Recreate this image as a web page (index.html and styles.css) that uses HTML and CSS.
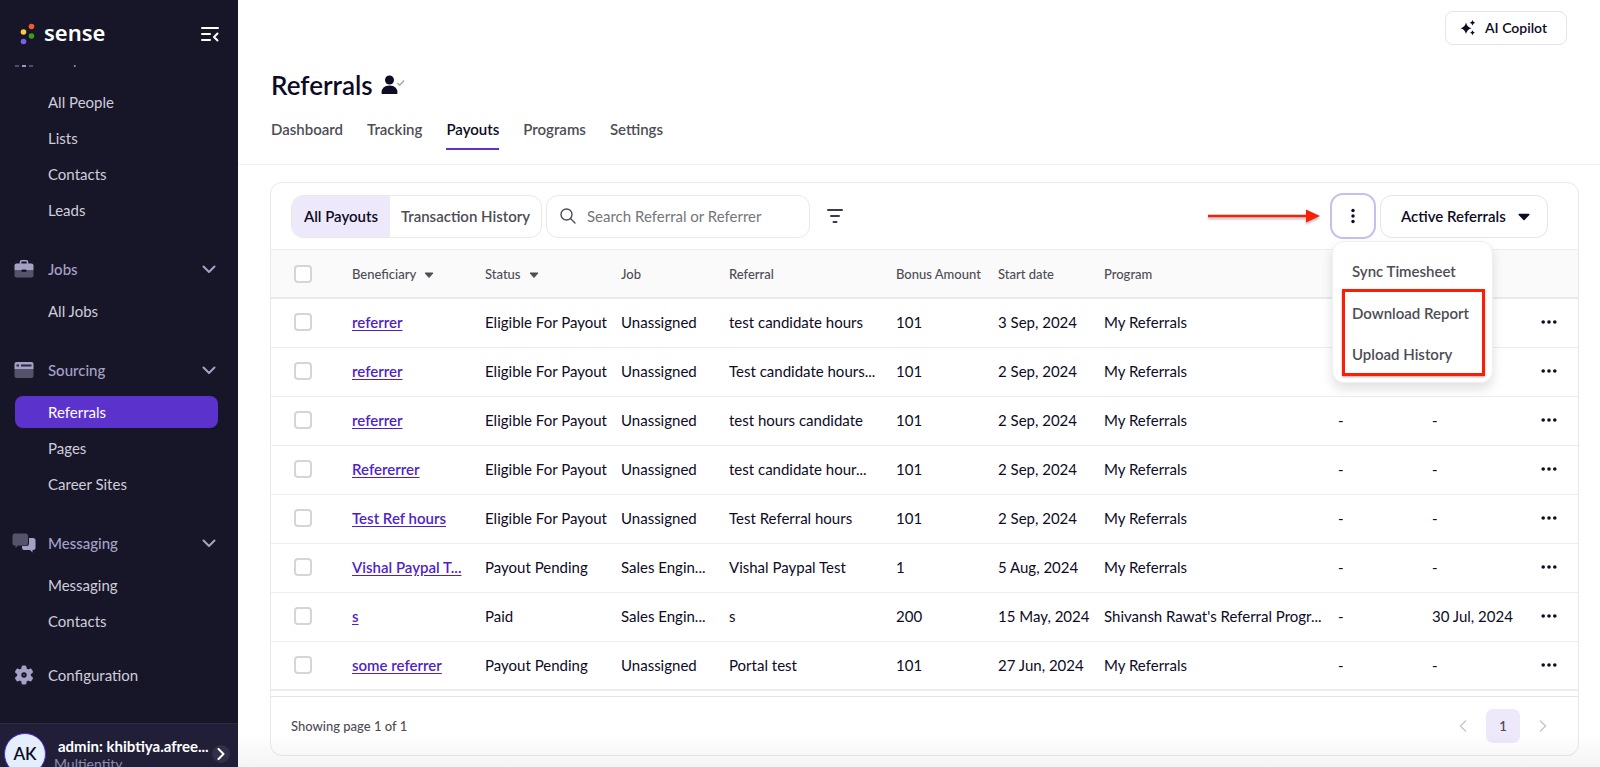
FILE: index.html
```html
<!DOCTYPE html>
<html lang="en">
<head>
<meta charset="utf-8">
<title>Referrals - Payouts</title>
<link rel="stylesheet" href="styles.css">
</head>
<body>
<div class="app">
  <aside class="sidebar">
    <div class="brand">
      <svg class="brand-mark" width="16" height="22" viewBox="0 0 16 22"><circle cx="11.5" cy="3.5" r="2.8" fill="#f4592b"/><circle cx="3.5" cy="9" r="2.8" fill="#fbc940"/><circle cx="11.5" cy="13" r="2.8" fill="#36a015"/><circle cx="3.5" cy="18.500" r="2.800" fill="#7661e6"/></svg>
      <span class="brand-name">sense</span>
      <button class="collapse" aria-label="Collapse menu"><svg width="20" height="18" viewBox="0 0 20 18" fill="none" stroke="#fff" stroke-width="2" stroke-linecap="round" stroke-linejoin="round"><path d="M2 3h16M2 9h8M2 15h8M17.500 8.500l-3.500 3.500 3.500 3.500"/></svg></button>
    </div>
    <nav class="nav">
      <div class="nav-clipped">
        <svg width="20" height="10" viewBox="0 0 20 10"><path d="M1 4h4v6H1zM15 4h4v6h-4z" fill="#504e66"/><path d="M8 3h4v7H8z" fill="#9d99bd"/></svg>
        <span>People</span>
      </div>
      <a href="#" class="nav-item">All People</a>
      <a href="#" class="nav-item">Lists</a>
      <a href="#" class="nav-item">Contacts</a>
      <a href="#" class="nav-item">Leads</a>
      <button class="nav-group">
        <svg width="20" height="20" viewBox="0 0 20 20"><path d="M6.500 5V2.800q0-1 1-1h5q1 0 1 1V5" fill="none" stroke="#a5a1c5" stroke-width="1.600"/><path d="M.5 6.500q0-2 2-2h15q2 0 2 2V11H.5z" fill="#a5a1c5"/><path d="M.5 11h19v5.500q0 2-2 2h-15q-2 0-2-2z" fill="#55536b"/><rect x="7.500" y="10.500" width="5" height="2.500" rx="1" fill="#171629"/></svg>
        <span>Jobs</span><svg class="chev" width="14" height="9" viewBox="0 0 14 9"><path d="M1.500 1.500 7 7l5.500-5.500"/></svg>
      </button>
      <a href="#" class="nav-item">All Jobs</a>
      <button class="nav-group">
        <svg width="20" height="20" viewBox="0 0 20 20"><path d="M.5 4q0-2 2-2h15q2 0 2 2v5H.5z" fill="#a5a1c5"/><path d="M.5 9h19v7q0 2-2 2h-15q-2 0-2-2z" fill="#55536b"/><path d="M2.500 4.500H5v2H2.500zM7 4.500h10.500v2H7z" fill="#2b2940"/></svg>
        <span>Sourcing</span><svg class="chev" width="14" height="9" viewBox="0 0 14 9"><path d="M1.500 1.500 7 7l5.500-5.500"/></svg>
      </button>
      <a href="#" class="nav-item active" aria-current="page">Referrals</a>
      <a href="#" class="nav-item">Pages</a>
      <a href="#" class="nav-item">Career Sites</a>
      <button class="nav-group">
        <svg width="24" height="20" viewBox="0 0 24 20"><path d="M17 5h4q2.500 0 2.500 2.500v7q0 2.500-2.500 2.500h-.5v2.500L18 17h-6q-2 0-2-2.500V13h4.500q2.500 0 2.500-2.500z" fill="#a5a1c5"/><path d="M2.500.5h11q2.500 0 2.500 2.500v7q0 2.500-2.500 2.500H6L3.500 15v-2.500h-1Q.5 12.500.5 10V3q0-2.500 2-2.500z" fill="#55536b"/></svg>
        <span>Messaging</span><svg class="chev" width="14" height="9" viewBox="0 0 14 9"><path d="M1.500 1.500 7 7l5.500-5.500"/></svg>
      </button>
      <a href="#" class="nav-item">Messaging</a>
      <a href="#" class="nav-item">Contacts</a>
      <a href="#" class="nav-group config">
        <svg width="20" height="20" viewBox="0 0 20 20"><g fill="#a5a1c5"><circle cx="10" cy="10" r="7"/><rect x="7.500" y=".5" width="5" height="19" rx="1.500"/><rect x="7.500" y=".5" width="5" height="19" rx="1.500" transform="rotate(60 10 10)"/><rect x="7.500" y=".5" width="5" height="19" rx="1.500" transform="rotate(120 10 10)"/></g><circle cx="10" cy="10" r="2.700" fill="#171629"/><circle cx="10" cy="10" r="1" fill="#55536b"/></svg>
        <span>Configuration</span>
      </a>
    </nav>
    <div class="account">
      <div class="avatar">AK</div>
      <div class="who"><div class="who-name">admin: khibtiya.afree...</div><div class="who-org">Multientity</div></div>
      <button class="account-open" aria-label="Open account menu"><svg width="8" height="12" viewBox="0 0 8 12" fill="none" stroke="#fff" stroke-width="2" stroke-linecap="round" stroke-linejoin="round"><path d="M1.500 1 6.500 6l-5 5"/></svg></button>
    </div>
  </aside>

  <main class="main">
    <div class="topbar">
      <button class="copilot"><svg width="16" height="16" viewBox="0 0 16 16" fill="#0d0b25"><path d="M6 2.500Q7 7 11.500 8.200 7 9.500 6 14 5 9.500.5 8.200 5 7 6 2.500zM12.500 0q.4 2.200 2.700 2.700-2.300.5-2.700 2.700-.4-2.200-2.700-2.700Q12.100 2.200 12.500 0zM12.500 10.300q.4 2 2.400 2.400-2 .4-2.400 2.500-.4-2.100-2.400-2.500 2-.4 2.400-2.400z"/></svg>AI Copilot</button>
    </div>
    <header class="page-head">
      <h1>Referrals <svg width="24" height="20" viewBox="0 0 24 20"><circle cx="8.500" cy="5" r="4.500" fill="#0d0b25"/><path d="M.5 18q0-7.500 8-7.500t8 7.500q0 1-1 1h-14q-1 0-1-1z" fill="#0d0b25"/><path d="M16.500 8l2.200 2.200L23 5.500" fill="none" stroke="#a6a6ae" stroke-width="1.500"/></svg></h1>
      <nav class="tabs">
        <a href="#">Dashboard</a><a href="#">Tracking</a><a href="#" class="on">Payouts</a><a href="#">Programs</a><a href="#">Settings</a>
      </nav>
    </header>

    <section class="card">
      <div class="toolbar">
        <div class="segmented"><button class="on">All Payouts</button><button>Transaction History</button></div>
        <label class="search"><svg width="16" height="16" viewBox="0 0 16 16" fill="none" stroke="#4d4d55" stroke-width="1.400" stroke-linecap="round"><circle cx="6.500" cy="6.500" r="5.500"/><path d="M10.500 10.500l4.500 4.500"/></svg><input type="text" placeholder="Search Referral or Referrer" aria-label="Search Referral or Referrer"></label>
        <button class="filter" aria-label="Filter"><svg width="18" height="16" viewBox="0 0 18 16" stroke="#3b3a48" stroke-width="2" stroke-linecap="round"><path d="M2 2h14M5 8h8M7.500 14h3"/></svg></button>
        <svg class="arrow" width="114" height="18" viewBox="0 0 114 18"><path d="M1 9h99" stroke="#fb1d06" stroke-width="2.500"/><path d="M99 2.500 113 9l-14 6.500z" fill="#fb1d06"/></svg>
        <div class="more">
          <button class="more-btn" aria-label="More actions" aria-expanded="true"><svg width="4" height="16" viewBox="0 0 4 16" fill="#0d0b25"><circle cx="2" cy="2.500" r="1.700"/><circle cx="2" cy="8" r="1.700"/><circle cx="2" cy="13.500" r="1.700"/></svg></button>
          <div class="menu">
            <button>Sync Timesheet</button>
            <div class="marked"><button>Download Report</button><button>Upload History</button></div>
          </div>
        </div>
        <div class="select-wrap">
          <select aria-label="Referral state"><option>Active Referrals</option></select>
          <svg width="12" height="8" viewBox="0 0 12 8"><path d="M1.200 1.500h9.600L6 6.500z" fill="#0d0b25" stroke="#0d0b25" stroke-width="1.500" stroke-linejoin="round"/></svg>
        </div>
      </div>

      <table>
        <colgroup><col class="c-check"><col class="c-ben"><col class="c-status"><col class="c-job"><col class="c-ref"><col class="c-bonus"><col class="c-start"><col class="c-prog"><col class="c-a"><col class="c-b"><col class="c-dots"></colgroup>
        <thead><tr>
          <th><input type="checkbox" aria-label="Select all"></th>
          <th>Beneficiary <svg class="sort" width="10" height="7" viewBox="0 0 10 7"><path d="M1 1h8L5 5.500z"/></svg></th>
          <th>Status <svg class="sort" width="10" height="7" viewBox="0 0 10 7"><path d="M1 1h8L5 5.500z"/></svg></th>
          <th>Job</th><th>Referral</th><th>Bonus Amount</th><th>Start date</th><th>Program</th><th></th><th></th><th></th>
        </tr></thead>
        <tbody id="rows"></tbody>
      </table>

      <footer class="pager">
        <span>Showing page 1 of 1</span>
        <div class="pages">
          <button aria-label="Previous page"><svg width="8" height="14" viewBox="0 0 8 14"><path d="M7 1.500 1.500 7 7 12.500"/></svg></button>
          <button class="current">1</button>
          <button aria-label="Next page"><svg width="8" height="14" viewBox="0 0 8 14"><path d="M1 1.500 6.500 7 1 12.500"/></svg></button>
        </div>
      </footer>
    </section>
    <div class="fade"></div>
  </main>
</div>
<script src="app.js"></script>
</body>
</html>
```
FILE: app.js
```javascript
const payouts = [
  ["referrer", "Eligible For Payout", "Unassigned", "test candidate hours", "101", "3 Sep, 2024", "My Referrals", "", ""],
  ["referrer", "Eligible For Payout", "Unassigned", "Test candidate hours...", "101", "2 Sep, 2024", "My Referrals", "", ""],
  ["referrer", "Eligible For Payout", "Unassigned", "test hours candidate", "101", "2 Sep, 2024", "My Referrals", "-", "-"],
  ["Refererrer", "Eligible For Payout", "Unassigned", "test candidate hour...", "101", "2 Sep, 2024", "My Referrals", "-", "-"],
  ["Test Ref hours", "Eligible For Payout", "Unassigned", "Test Referral hours", "101", "2 Sep, 2024", "My Referrals", "-", "-"],
  ["Vishal Paypal T...", "Payout Pending", "Sales Engin...", "Vishal Paypal Test", "1", "5 Aug, 2024", "My Referrals", "-", "-"],
  ["s", "Paid", "Sales Engin...", "s", "200", "15 May, 2024", "Shivansh Rawat's Referral Progr...", "-", "30 Jul, 2024"],
  ["some referrer", "Payout Pending", "Unassigned", "Portal test", "101", "27 Jun, 2024", "My Referrals", "-", "-"]
];

const dots = '<svg width="16" height="4" viewBox="0 0 16 4" fill="#0d0b25"><circle cx="2.200" cy="2" r="1.800"/><circle cx="8" cy="2" r="1.800"/><circle cx="13.800" cy="2" r="1.800"/></svg>';

document.getElementById("rows").innerHTML = payouts.map(([name, ...cells]) =>
  `<tr><td><input type="checkbox" aria-label="Select ${name}"></td><td><a href="#">${name}</a></td>` +
  cells.map(c => `<td>${c}</td>`).join("") +
  `<td><button class="row-more" aria-label="Row actions">${dots}</button></td></tr>`
).join("");
```
FILE: styles.css
```css
* { box-sizing: border-box; }
body { margin: 0; font-family: Lato, "Open Sans", sans-serif; font-size: 14px; line-height: 20px; color: #0d0b25; background: #fff; }
button, input, select { font: inherit; color: inherit; }
button { padding: 0; border: 0; background: none; }
a { color: inherit; text-decoration: none; }
svg { flex: none; }

.app { display: flex; height: 100vh; overflow: hidden; }

.sidebar { width: 238px; flex: none; display: flex; flex-direction: column; background: #171629; }
.brand { height: 65px; flex: none; display: flex; align-items: center; padding: 3px 18px 0 20px; }
.brand-name { margin-left: 8px; font: 600 22px/24px "Noto Sans", sans-serif; color: #fff; padding-bottom: 5px; }
.collapse { margin-left: auto; display: flex; }
.nav { flex: 1; min-height: 0; overflow: hidden; display: flex; flex-direction: column; color: #cfcdda; font-size: 15px; }
.nav-clipped { height: 2px; flex: none; margin-bottom: 17px; display: flex; align-items: flex-end; overflow: hidden; gap: 14px; padding-left: 14px; line-height: 18px; color: #9d99bd; }
.nav-item { flex: none; height: 32px; margin: 2px 20px 2px 15px; padding-left: 33px; display: flex; align-items: center; border-radius: 8px; }
.nav-item.active { background: #5b33cc; color: #fff; }
.nav-group { flex: none; height: 32px; margin: 25px 22px 8px 14px; display: flex; align-items: center; text-align: left; color: #a5a1c5; font-weight: 500; }
.nav-group > svg:first-child { width: 24px; margin-left: -2px; margin-right: 12px; }
.nav-group.config { margin-top: 20px; color: #cfcdda; font-weight: 400; }
.chev { margin-left: auto; fill: none; stroke: #a5a1c5; stroke-width: 2; stroke-linecap: round; stroke-linejoin: round; }
.account { height: 44px; flex: none; display: flex; align-items: flex-start; overflow: hidden; padding: 9px 8px 0 4px; background: #211f37; border-top: 1px solid #2c2a41; }
.avatar { width: 42px; height: 42px; flex: none; border: 1px solid #4a2fd8; border-radius: 50%; background: #e5eefd; color: #0d0b25; display: flex; align-items: center; justify-content: center; font-size: 17px; font-weight: 600; }
.who { flex: 1; min-width: 0; padding: 3px 0 0 8px; white-space: nowrap; }
.who-name { padding-left: 4px; color: #fff; font-size: 15px; font-weight: 700; }
.who-org { color: #8f8cab; line-height: 16px; }
.account-open { width: 18px; height: 18px; margin-top: 12px; flex: none; border-radius: 50%; background: #322f4a; display: flex; align-items: center; justify-content: center; }

.main { position: relative; flex: 1; min-width: 0; display: flex; flex-direction: column; }
.topbar { display: flex; justify-content: flex-end; padding: 11px 33px 0; }
.copilot { width: 122px; height: 34px; display: flex; align-items: center; gap: 9px; padding-left: 14px; border: 1px solid #e5e5e8; border-radius: 8px; font-size: 14px; font-weight: 600; }
.page-head { padding: 23px 33px 0; border-bottom: 1px solid #f1f1f3; }
h1 { margin: 0; display: flex; align-items: center; gap: 8px; font-size: 26px; line-height: 34px; font-weight: 600; }
.tabs { display: flex; gap: 24px; margin-top: 17px; color: #4d4d55; font-weight: 600; font-size: 15px; padding-bottom: 14px; }
.tabs a { height: 31px; border-bottom: 2px solid transparent; }
.tabs .on { color: #0d0b25; border-color: #5b33cc; }

.card { margin: 17px 21px 0 32px; border: 1px solid #e9e9ec; border-radius: 12px; }
.toolbar { height: 66px; display: flex; align-items: center; padding: 0 30px 0 20px; }
.segmented { width: 251px; height: 43px; display: flex; border: 1px solid #e9e9ec; border-radius: 12px; overflow: hidden; font-weight: 600; font-size: 15px; color: #4d4d55; }
.segmented button { flex: 1 0 auto; white-space: nowrap; }
.segmented .on { flex: 0 0 98px; background: #eee9fa; color: #0d0b25; }
.search { width: 264px; height: 43px; margin-left: 4px; display: flex; align-items: center; gap: 11px; padding: 0 13px; border: 1px solid #e9e9ec; border-radius: 12px; }
.search input { flex: 1; min-width: 0; border: 0; outline: 0; padding: 0; background: none; font-size: 15px; }
.search input::placeholder { color: #75757c; opacity: 1; }
.filter { margin-left: 16px; display: flex; }
.arrow { margin-left: auto; margin-right: 9px; filter: drop-shadow(0 2px 1px #0004); }
.more { position: relative; }
.more-btn { width: 46px; height: 46px; display: flex; align-items: center; justify-content: center; border: 2px solid #c9bdf0; border-radius: 13px; background: #fff; }
.menu { position: absolute; z-index: 2; top: 48px; left: 2px; width: 161px; padding: 8px 7px 6px 9px; border: 1px solid #efeff1; border-radius: 12px; background: #fff; box-shadow: 0 6px 12px #0000001f; color: #4d4d55; font-weight: 600; font-size: 15px; }
.menu button { display: block; width: 100%; height: 41px; padding-left: 10px; text-align: left; white-space: nowrap; }
.menu .marked { height: 87px; margin-top: -2px; border: 3px solid #fb1d06; box-shadow: 0 1px 2px #0005; }
.menu .marked button { padding-left: 7px; }
.select-wrap { position: relative; width: 168px; margin-left: 4px; }
.select-wrap select { appearance: none; display: block; width: 100%; height: 43px; padding: 0 40px 0 20px; border: 1px solid #e5e5e8; border-radius: 12px; background: #fff; font-weight: 600; font-size: 15px; }
.select-wrap svg { position: absolute; right: 18px; top: 18px; pointer-events: none; }

table { width: 100%; table-layout: fixed; border-collapse: separate; border-spacing: 0; }
.c-check { width: 81px; } .c-ben { width: 133px; } .c-status { width: 136px; } .c-job { width: 108px; }
.c-ref { width: 167px; } .c-bonus { width: 102px; } .c-start { width: 106px; } .c-a { width: 94px; } .c-b { width: 109px; } .c-dots { width: 37px; }
th, td { height: 49px; padding: 0; text-align: left; white-space: nowrap; border-bottom: 1px solid #ededf0; }
th { height: 50px; font-size: 13px; font-weight: 500; color: #4d4d55; background: #fafafa; border-top: 1px solid #ededf0; border-bottom: 2px solid #e9e9ec; }
td { padding-bottom: 2px; font-size: 15px; }
th:first-child, td:first-child { padding-left: 23px; }
td a { color: #4f1fc9; font-weight: 600; text-decoration: underline; text-underline-offset: 2px; }
tbody tr:last-child td { border-bottom-width: 2px; }
input[type=checkbox] { appearance: none; display: block; width: 18px; height: 18px; margin: 0; border: 2px solid #d5d5d8; border-radius: 4px; background: #fff; }
.sort { margin-left: 5px; fill: #4d4d55; stroke: #4d4d55; stroke-linejoin: round; vertical-align: middle; }
.row-more { display: flex; }

.pager { height: 59px; margin-top: 5px; display: flex; align-items: center; justify-content: space-between; padding: 0 31px 0 20px; border-top: 1px solid #e3e3e6; font-size: 13px; font-weight: 500; color: #4d4d55; }
.pages { display: flex; align-items: center; gap: 19px; }
.pages svg { display: block; fill: none; stroke: #c9c9cd; stroke-width: 1.5; }
.pages .current { width: 34px; height: 34px; border-radius: 7px; background: #eee9fa; font-weight: 600; }
.fade { position: absolute; left: 0; right: 0; bottom: 0; height: 34px; pointer-events: none; background: linear-gradient(#0000, #0000000b); }
```
